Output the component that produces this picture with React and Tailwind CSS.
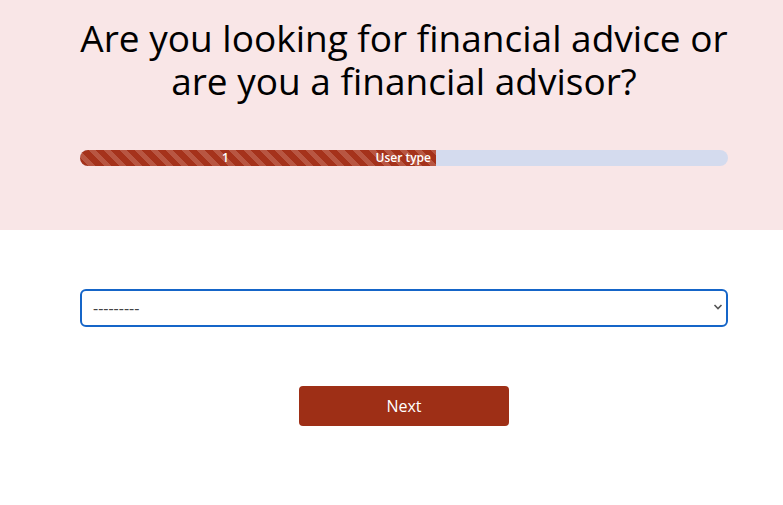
import React from 'react';

const App = () => {
    return (
        <div className="w-[783px] overflow-hidden">
            <div className="min-h-[505px] w-[808px] bg-white" style={{ fontFamily: '"Open Sans", sans-serif' }}>
                {/* cabecera */}
                <section className="h-[230px] bg-[#f9e6e7] px-[80px] pt-[16px]">
                    <h1 className="text-center text-[37px] leading-[43px] text-black">
                        Are you looking for financial advice or are you a financial advisor?
                    </h1>
                    <div className="mt-[48px] h-[16px] rounded-full bg-[#d4dbee] overflow-hidden">
                        <div
                            className="flex h-full w-[356px] items-center justify-between pl-[142px] pr-[5px] text-[12px] font-semibold leading-none text-white bg-[repeating-linear-gradient(45deg,#a5321b_0px,#a5321b_6px,#b85642_6px,#b85642_11px)]"
                        >
                            <span>1</span>
                            <span>User type</span>
                        </div>
                    </div>
                </section>

                {/* formulario */}
                <section className="px-[80px] pt-[59px]">
                    <div className="relative">
                        <select className="h-[38px] w-full appearance-none rounded-[6px] border-2 border-[#1565c8] bg-white pl-[11px] text-[16px] text-[#444] outline-none">
                            <option>---------</option>
                        </select>
                        <svg className="pointer-events-none absolute right-[5px] top-[14px]" width="10" height="8" viewBox="0 0 10 8">
                            <path d="M1.5 2 L5 5.5 L8.5 2" fill="none" stroke="#555" strokeWidth="1.6" />
                        </svg>
                    </div>
                    <div className="mt-[59px] flex justify-center">
                        <button className="h-[40px] w-[210px] rounded-[4px] bg-[#9e2f16] text-[16px] font-medium text-white">
                            Next
                        </button>
                    </div>
                </section>
            </div>
        </div>
    );
};

export default App;
